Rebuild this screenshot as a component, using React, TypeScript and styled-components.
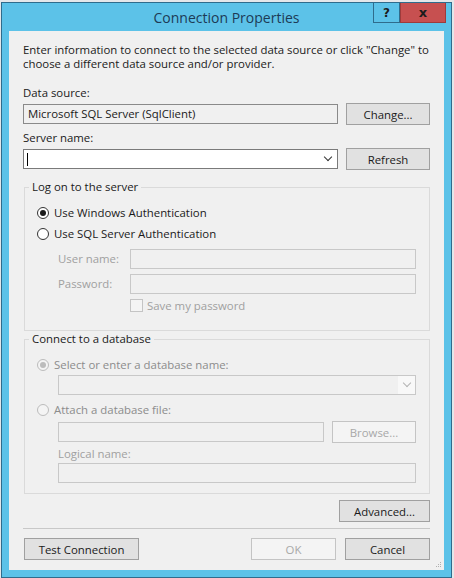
import styled, { createGlobalStyle } from "styled-components";

const GlobalStyle = createGlobalStyle`
  body {
    margin: 0;
    background: #e4e7ea;
    font-family: "Open Sans", "Noto Sans", sans-serif;
    font-size: 11.4px;
    color: #1a1a1a;
  }
`;

export default function App() {
  return (
    <>
      <GlobalStyle />
      <Window>
        <TitleBar>
          <span />
          <Title>Connection Properties</Title>
          <Caption>
            <CaptionBtn>?</CaptionBtn>
            <CaptionBtn $close>x</CaptionBtn>
          </Caption>
        </TitleBar>

        <Client>
          <Intro>
            Enter information to connect to the selected data source or click "Change" to choose a
            different data source and/or provider.
          </Intro>

          <Label $top={15}>Data source:</Label>
          <Row>
            <TextBox $bg="#f0f0f0">Microsoft SQL Server (SqlClient)</TextBox>
            <Button>Change...</Button>
          </Row>

          <Label $top={6}>Server name:</Label>
          <Row>
            <Combo>
              <Caret />
              <Chevron />
            </Combo>
            <Button>Refresh</Button>
          </Row>

          <Group $top={10} $height={151}>
            <legend>Log on to the server</legend>
            <Option $top={12}>
              <Radio $checked />
              Use Windows Authentication
            </Option>
            <Option $top={7}>
              <Radio />
              Use SQL Server Authentication
            </Option>
            <Credentials>
              <DimLabel>User name:</DimLabel>
              <TextBox $disabled />
              <DimLabel>Password:</DimLabel>
              <TextBox $disabled />
              <span />
              <CheckRow>
                <Check />
                Save my password
              </CheckRow>
            </Credentials>
          </Group>

          <Group $top={1} $height={162}>
            <legend>Connect to a database</legend>
            <Option $top={12} $disabled>
              <Radio $checked $disabled />
              Select or enter a database name:
            </Option>
            <Indent $top={3}>
              <Combo $disabled>
                <DropZone>
                  <Chevron $disabled />
                </DropZone>
              </Combo>
            </Indent>
            <Option $top={8} $disabled>
              <Radio $disabled />
              Attach a database file:
            </Option>
            <Indent $top={4}>
              <Row $gap={8}>
                <TextBox $disabled />
                <Button $disabled>Browse...</Button>
              </Row>
              <DimLabel $top={4}>Logical name:</DimLabel>
              <Spacer />
              <TextBox $disabled />
            </Indent>
          </Group>

          <AdvancedRow>
            <Button $width={91}>Advanced...</Button>
          </AdvancedRow>
          <Separator />
          <Footer>
            <Button $width={115}>Test Connection</Button>
            <span />
            <Button $disabled $width={85}>OK</Button>
            <Button $width={85}>Cancel</Button>
          </Footer>
          <Grip>
            <svg width="7" height="7" viewBox="0 0 7 7">
              <rect x="5" y="1" width="1" height="1" fill="#b0b0b0" />
              <rect x="3" y="3" width="1" height="1" fill="#b0b0b0" />
              <rect x="5" y="3" width="1" height="1" fill="#b0b0b0" />
              <rect x="1" y="5" width="1" height="1" fill="#b0b0b0" />
              <rect x="3" y="5" width="1" height="1" fill="#b0b0b0" />
              <rect x="5" y="5" width="1" height="1" fill="#b0b0b0" />
            </svg>
          </Grip>
        </Client>
      </Window>
    </>
  );
}

const Window = styled.div`
  margin: 2px 0 0 1px;
  width: 451px;
  height: 576px;
  box-sizing: border-box;
  border: 1px solid #2f6c8c;
  background: #5cc2e8;
  display: flex;
  flex-direction: column;
`;

const TitleBar = styled.div`
  height: 28px;
  display: grid;
  grid-template-columns: 1fr auto 1fr;
  align-items: start;
`;

const Title = styled.div`
  font-size: 14px;
  color: #1d3b56;
  line-height: 29px;
`;

const Caption = styled.div`
  justify-self: end;
  display: flex;
  margin-right: 5px;
`;

const CaptionBtn = styled.div<{ $close?: boolean }>`
  width: ${(p) => (p.$close ? 46 : 27)}px;
  height: 20px;
  box-sizing: border-box;
  display: flex;
  align-items: center;
  justify-content: center;
  font-family: "DejaVu Sans", sans-serif;
  font-weight: bold;
  font-size: ${(p) => (p.$close ? 13 : 12)}px;
  color: #1c1c1c;
  background: ${(p) => (p.$close ? "#c75050" : "#5cc2e8")};
  border: 1px solid ${(p) => (p.$close ? "#9e3b3b" : "#2f6c8c")};
  border-top: none;
`;

const Client = styled.div`
  flex: 1;
  margin: 0 7px 7px 7px;
  background: #f0f0f0;
  padding: 12px 14px 0 14px;
  display: flex;
  flex-direction: column;
  position: relative;
`;

const Intro = styled.p`
  margin: 0;
  line-height: 14px;
`;

const Label = styled.div<{ $top?: number }>`
  margin-top: ${(p) => p.$top ?? 0}px;
  line-height: 14px;
  height: 17px;
`;

const Row = styled.div<{ $gap?: number }>`
  display: flex;
  align-items: center;
  gap: ${(p) => p.$gap ?? 8}px;
`;

const TextBox = styled.div<{ $bg?: string; $disabled?: boolean }>`
  flex: 1;
  height: 20px;
  box-sizing: border-box;
  border: 1px solid ${(p) => (p.$disabled ? "#c8c8c8" : "#8a8a8a")};
  background: ${(p) => p.$bg ?? (p.$disabled ? "#f0f0f0" : "#fff")};
  padding: 0 4px;
  line-height: 18px;
  white-space: nowrap;
`;

const Combo = styled.div<{ $disabled?: boolean }>`
  flex: 1;
  height: 20px;
  box-sizing: border-box;
  border: 1px solid ${(p) => (p.$disabled ? "#c8c8c8" : "#7a7a7a")};
  background: ${(p) => (p.$disabled ? "#f0f0f0" : "#fff")};
  display: flex;
  align-items: center;
  justify-content: space-between;
  padding: 0 ${(p) => (p.$disabled ? 0 : 6)}px 0 3px;
`;

const DropZone = styled.div`
  margin-left: auto;
  width: 17px;
  height: 18px;
  background: #f8f8f8;
  display: flex;
  align-items: center;
  justify-content: center;
`;

const Caret = styled.span`
  width: 1px;
  height: 13px;
  background: #000;
`;

const Chevron = styled.span<{ $disabled?: boolean }>`
  margin-left: auto;
  margin-right: ${(p) => (p.$disabled ? "auto" : "0")};
  width: 5px;
  height: 5px;
  border-right: 1.5px solid ${(p) => (p.$disabled ? "#b4b4b4" : "#333")};
  border-bottom: 1.5px solid ${(p) => (p.$disabled ? "#b4b4b4" : "#333")};
  transform: translateY(-2px) rotate(45deg);
`;

const Button = styled.div<{ $disabled?: boolean; $width?: number }>`
  width: ${(p) => p.$width ?? 84}px;
  height: 22px;
  box-sizing: border-box;
  display: flex;
  align-items: center;
  justify-content: center;
  border: 1px solid ${(p) => (p.$disabled ? "#c4c4c4" : "#a0a0a0")};
  background: ${(p) => (p.$disabled ? "#f4f4f4" : "#e1e1e1")};
  color: ${(p) => (p.$disabled ? "#a8a8a8" : "#1a1a1a")};
  flex-shrink: 0;
`;

const Group = styled.fieldset<{ $top: number; $height: number }>`
  margin: ${(p) => p.$top}px 0 0 1px;
  height: ${(p) => p.$height}px;
  box-sizing: border-box;
  border: 1px solid #dadada;
  padding: 0 13px 0 12px;
  min-width: 0;

  legend {
    margin-left: -8px;
    padding: 0 3px;
    line-height: 14px;
    color: #1a1a1a;
  }
`;

const Option = styled.div<{ $top?: number; $disabled?: boolean }>`
  margin-top: ${(p) => p.$top ?? 0}px;
  display: flex;
  align-items: center;
  gap: 5px;
  line-height: 14px;
  color: ${(p) => (p.$disabled ? "#8c8c8c" : "#1a1a1a")};
`;

const Radio = styled.span<{ $checked?: boolean; $disabled?: boolean }>`
  width: 12px;
  height: 12px;
  box-sizing: border-box;
  border-radius: 50%;
  border: 1px solid ${(p) => (p.$disabled ? "#bcbcbc" : "#333")};
  background: ${(p) => (p.$disabled ? "#f4f4f4" : "#fff")};
  display: flex;
  align-items: center;
  justify-content: center;

  &::after {
    content: "";
    width: 6px;
    height: 6px;
    border-radius: 50%;
    background: ${(p) => (p.$disabled ? "#bcbcbc" : "#1a1a1a")};
    display: ${(p) => (p.$checked ? "block" : "none")};
  }
`;

const Credentials = styled.div`
  display: grid;
  grid-template-columns: 72px 1fr;
  row-gap: 5px;
  align-items: center;
  margin: 8px 0 0 21px;
`;

const DimLabel = styled.div<{ $top?: number }>`
  color: #a0a0a0;
  line-height: 14px;
  margin-top: ${(p) => p.$top ?? 0}px;
`;

const CheckRow = styled.div`
  display: flex;
  align-items: center;
  gap: 4px;
  color: #a0a0a0;
  margin-top: -1px;
`;

const Check = styled.span`
  width: 13px;
  height: 13px;
  box-sizing: border-box;
  border: 1px solid #c4c4c4;
  background: #f4f4f4;
`;

const Indent = styled.div<{ $top?: number }>`
  margin: ${(p) => p.$top ?? 0}px 0 0 21px;
`;

const Spacer = styled.div`
  height: 2px;
`;

const AdvancedRow = styled.div`
  display: flex;
  justify-content: flex-end;
  margin-top: 6px;
`;

const Separator = styled.div`
  height: 1px;
  background: #c8c8c8;
  margin: 6px 0 9px 0;
`;

const Footer = styled.div`
  display: grid;
  grid-template-columns: 115px 1fr 85px 85px;
  column-gap: 9px;
  padding-left: 1px;
`;

const Grip = styled.div`
  position: absolute;
  right: 2px;
  bottom: 2px;
  width: 7px;
  height: 7px;
  display: flex;
`;
